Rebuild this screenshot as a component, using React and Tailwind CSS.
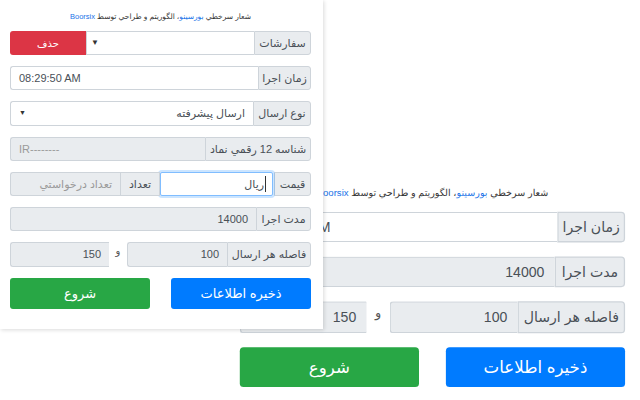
const font = "font-['Liberation_Sans','DejaVu_Sans',sans-serif]";

const Label = ({ w, children }) => (
  <div className={`${w} shrink-0 flex items-center justify-center bg-[#e9ecef] border border-[#ced4da] rounded-r-[3px] text-[11px] text-[#495057] whitespace-nowrap`}>
    {children}
  </div>
);

const Input = ({ gray, left, muted, className = '', children }) => (
  <div
    className={`flex-1 min-w-0 flex items-center px-[8px] border border-[#ced4da] border-r-0 rounded-l-[3px] text-[11px] whitespace-nowrap ${
      gray ? 'bg-[#e9ecef]' : 'bg-white'
    } ${left ? 'justify-end' : 'justify-start'} ${muted ? 'text-[#9a9a9a]' : 'text-[#495057]'} ${className}`}
  >
    {children}
  </div>
);

const Header = () => (
  <p className="h-[12px] mb-[8px] text-center text-[7.5px] leading-[12px] text-[#333]">
    شعار سرخطي <span className="text-[#1a73e8]">بورسينو</span>، الگوريتم و طراحي توسط{' '}
    <span className="text-[#1a73e8]">Boorsix</span>
  </p>
);

const TimeRow = () => (
  <div className="flex h-[24px]">
    <Label w="w-[53px]">زمان اجرا</Label>
    <Input left>
      <span dir="ltr">08:29:50 AM</span>
    </Input>
  </div>
);

const DurationRow = () => (
  <div className="flex h-[24px]">
    <Label w="w-[55px]">مدت اجرا</Label>
    <Input gray className="ml-0">14000</Input>
  </div>
);

const IntervalRow = () => (
  <div className="flex h-[25px]">
    <Label w="w-[84px]">فاصله هر ارسال</Label>
    <div className="w-[100px] shrink-0 flex">
      <Input gray>100</Input>
    </div>
    <div className="w-[18px] shrink-0 flex items-start justify-center text-[10px] text-[#555] pt-[1px]">و</div>
    <div className="flex-1 flex">
      <Input gray className="border-r">150</Input>
    </div>
  </div>
);

const Buttons = () => (
  <div className="mt-[11px] flex justify-between h-[31px]">
    <button className="w-[140px] rounded-[3px] bg-[#007bff] text-white text-[13px]">ذخيره اطلاعات</button>
    <button className="w-[140px] rounded-[3px] bg-[#28a745] text-white text-[13px]">شروع</button>
  </div>
);

const SmallForm = () => (
  <div dir="rtl" className="w-[323px] pl-[10px] pr-[12px] pt-[11px] flex flex-col">
    <Header />
    <div className="flex flex-col gap-[11px]">
      <div className="flex h-[24px]">
        <Label w="w-[57px]">سفارشات</Label>
        <div className="w-[168px] shrink-0 flex items-center justify-end pl-[4px] bg-white border border-[#ced4da] border-r-0 text-[8px] text-[#333]">
          ▼
        </div>
        <button className="flex-1 rounded-l-[3px] bg-[#dc3545] text-white text-[10px]">حذف</button>
      </div>
      <TimeRow />
      <div className="flex h-[25px]">
        <Label w="w-[58px]">نوع ارسال</Label>
        <div className="flex-1 flex items-center justify-between px-[8px] bg-white border border-[#ced4da] border-r-0 rounded-l-[3px] text-[11px] text-[#495057]">
          <span>ارسال پيشرفته</span>
          <span className="text-[7px] text-[#333]">▼</span>
        </div>
      </div>
      <div className="flex h-[24px]">
        <Label w="w-[106px]">شناسه 12 رقمي نماد</Label>
        <Input gray left muted>
          <span dir="ltr">IR--------</span>
        </Input>
      </div>
      <div className="flex h-[24px]">
        <Label w="w-[37px]">قيمت</Label>
        <div className="w-[113px] shrink-0 flex items-center px-[6px] mr-[1px] bg-white border border-[#80bdff] rounded-[2px] shadow-[0_0_0_2px_rgba(0,123,255,0.2)] text-[11px] text-[#495057]">
          <span className="border-r border-[#333] pr-[1px]">ريال</span>
        </div>
        <div className="w-[40px] shrink-0 flex items-center justify-center bg-[#e9ecef] border border-[#ced4da] text-[11px] text-[#495057]">
          تعداد
        </div>
        <Input gray muted>تعداد درخواستي</Input>
      </div>
      <DurationRow />
      <IntervalRow />
    </div>
    <Buttons />
  </div>
);

const LargeForm = () => (
  <div dir="rtl" className="w-[323px] pl-[10px] pr-[12px] pt-[11px] flex flex-col">
    <Header />
    <div className="flex flex-col gap-[11px]">
      <TimeRow />
      <DurationRow />
      <IntervalRow />
    </div>
    <Buttons />
  </div>
);

export default function App() {
  return (
    <div className={`relative w-[640px] h-[400px] overflow-hidden bg-white ${font}`}>
      <div className="absolute left-[227px] top-[172px] origin-top-left scale-[1.28] bg-white">
        <LargeForm />
      </div>
      <div className="absolute left-0 top-0 z-10 w-[323px] h-[329px] bg-white shadow-[1px_1px_4px_rgba(0,0,0,0.15)]">
        <SmallForm />
      </div>
    </div>
  );
}
